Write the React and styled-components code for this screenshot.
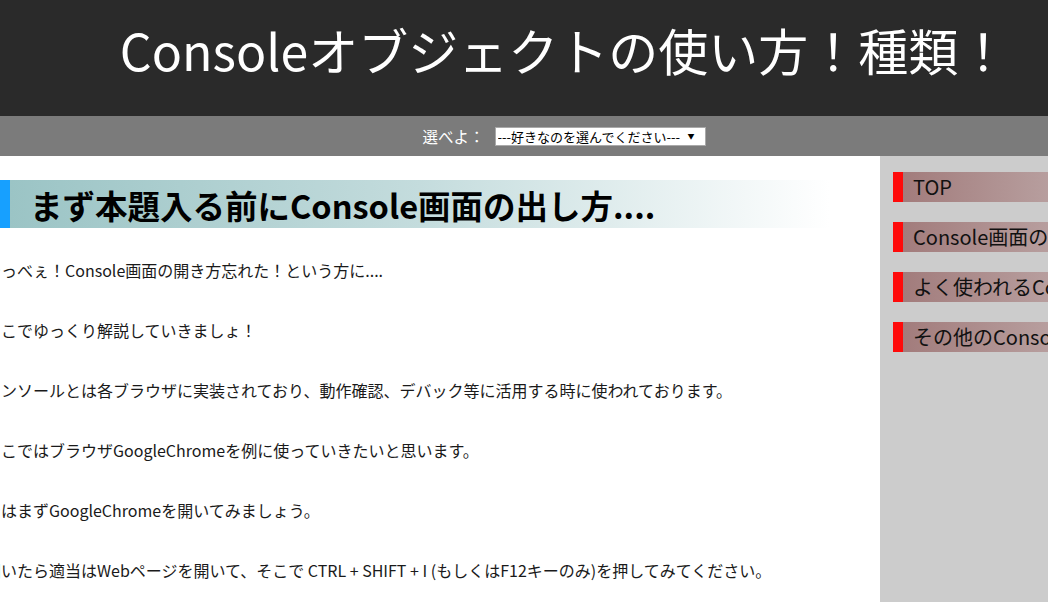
import React from "react";
import styled, { createGlobalStyle } from "styled-components";

const GlobalStyle = createGlobalStyle`
  html, body {
    margin: 0;
    padding: 0;
    overflow: hidden;
    background: #ffffff;
  }
  body {
    font-family: "Noto Sans CJK JP", "Noto Sans", sans-serif;
  }
`;

const Page = styled.div`
  width: 1128px;
  min-height: 602px;
`;

const Header = styled.header`
  height: 116px;
  background: #2a2a2a;
  display: flex;
  justify-content: center;
  align-items: flex-start;
  padding-top: 16px;
  box-sizing: border-box;

  h1 {
    margin: 0;
    font-size: 50px;
    font-weight: 400;
    color: #ffffff;
    line-height: 66px;
  }
`;

const Nav = styled.nav`
  height: 40px;
  background: #7b7b7b;
  display: flex;
  justify-content: center;
  align-items: center;
  gap: 10px;

  label {
    color: #ffffff;
    font-size: 15.5px;
  }
`;

const SelectWrap = styled.div`
  position: relative;
  width: 211px;
  height: 19px;

  &::after {
    content: "▼";
    position: absolute;
    right: 11px;
    top: 5px;
    font-size: 7px;
    line-height: 8px;
    color: #000;
    pointer-events: none;
  }

  select {
    appearance: none;
    display: block;
    width: 100%;
    height: 100%;
    border: 1px solid #a9a9a9;
    background: #ffffff;
    font-family: "Noto Sans CJK JP", sans-serif;
    font-size: 13px;
    padding: 0 20px 0 2px;
    color: #000;
    border-radius: 0;
    line-height: 17px;
  }
`;

const Body = styled.div`
  display: flex;
  min-height: 446px;
`;

const Main = styled.main`
  width: 880px;
  background: #ffffff;
  padding-top: 24px;
  box-sizing: border-box;
  overflow: hidden;
`;

const Heading = styled.h2`
  margin: 0 50px 12px 0;
  height: 48px;
  display: flex;
  align-items: center;
  border-left: 10px solid #17a0ff;
  padding-left: 20px;
  background: linear-gradient(to right, #9bc4c5 0%, #c4dcdd 50%, #ffffff 100%);
  font-size: 32.5px;
  font-weight: 700;
  color: #000;
  white-space: nowrap;
`;

const Para = styled.p`
  margin: 0 0 0 -15px;
  line-height: 60px;
  font-size: 16px;
  color: #1a1a1a;
  white-space: nowrap;
`;

const Sidebar = styled.aside`
  width: 248px;
  background: #cccccc;
  padding: 16px 0 0 13px;
  box-sizing: border-box;
  display: flex;
  flex-direction: column;
  gap: 20px;
`;

const SideItem = styled.a`
  display: block;
  height: 30px;
  line-height: 29px;
  border-left: 10px solid #ff0a0a;
  padding-left: 10px;
  background: linear-gradient(to right, #a27c7c 0%, #b9a1a1 70%, #c6b4b4 100%);
  color: #111;
  font-size: 20px;
  white-space: nowrap;
  overflow: hidden;
  text-decoration: none;
`;

const paragraphs = [
  "やっべぇ！Console画面の開き方忘れた！という方に....",
  "ここでゆっくり解説していきましょ！",
  "コンソールとは各ブラウザに実装されており、動作確認、デバック等に活用する時に使われております。",
  "ここではブラウザGoogleChromeを例に使っていきたいと思います。",
  "ではまずGoogleChromeを開いてみましょう。",
  "開いたら適当はWebページを開いて、そこで CTRL + SHIFT + I (もしくはF12キーのみ)を押してみてください。",
];

const menu = [
  "TOP",
  "Console画面の出し方",
  "よく使われるConsole",
  "その他のConsole",
];

export default function App() {
  return (
    <>
      <GlobalStyle />
      <Page>
        <Header>
          <h1>Consoleオブジェクトの使い方！種類！</h1>
        </Header>
        <Nav>
          <label htmlFor="pick">選べよ：</label>
          <SelectWrap>
            <select id="pick" defaultValue="">
              <option value="">---好きなのを選んでください---</option>
            </select>
          </SelectWrap>
        </Nav>
        <Body>
          <Main>
            <Heading>まず本題入る前にConsole画面の出し方....</Heading>
            {paragraphs.map((t, i) => (
              <Para key={i}>{t}</Para>
            ))}
          </Main>
          <Sidebar>
            {menu.map((m) => (
              <SideItem key={m} href="#">
                {m}
              </SideItem>
            ))}
          </Sidebar>
        </Body>
      </Page>
    </>
  );
}
